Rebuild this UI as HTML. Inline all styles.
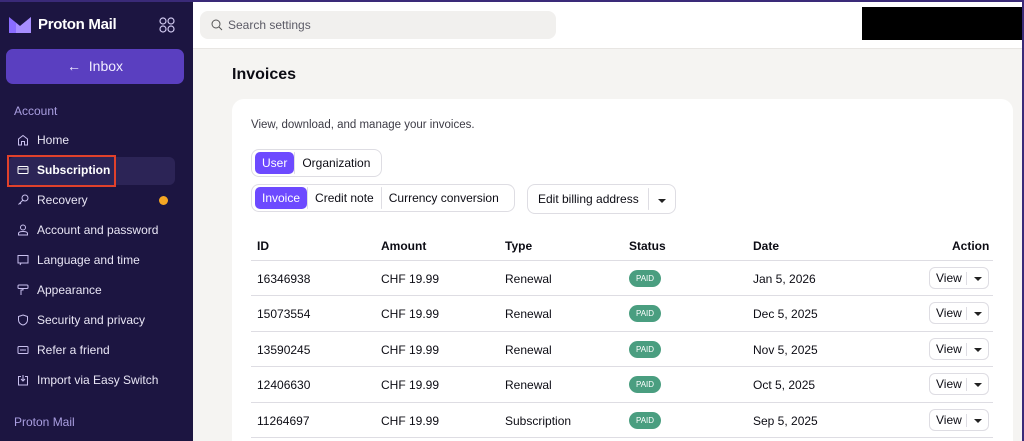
<!DOCTYPE html>
<html style="overflow:hidden;width:1024px;height:441px"><head><meta charset="utf-8"><style>
*{box-sizing:border-box;margin:0;padding:0}
body{width:1024px;height:441px;overflow:hidden;font-family:"Liberation Sans",sans-serif;background:#f5f4f2;position:relative;font-size:13px;color:#0c0c14;white-space:nowrap}
.sb{position:absolute;left:0;top:0;width:193px;height:441px;background:#1c1541;color:#fff}
.topline{position:absolute;left:0;top:0;width:1024px;height:2px;background:#3a2a78;z-index:5}
.rightline{position:absolute;right:0;top:0;width:2px;height:441px;background:#3a2a78;z-index:5}
.hdr{position:absolute;left:193px;top:0;right:0;height:49px;background:#fff;border-bottom:1px solid #e8e6e3}
.search{position:absolute;left:7px;top:11px;width:356px;height:28px;background:#f1f0ee;border-radius:8px;font-size:12px;color:#5c5b66;padding:7px 0 0 28px}
.blk{position:absolute;left:669px;top:7px;width:160px;height:33px;background:#000}
.sb .item{position:absolute;left:17px;font-size:12px;color:#e9e6f5;display:flex;align-items:center;gap:8px}
.ic{width:12px;height:12px;display:inline-block}
.card{position:absolute;left:232px;top:99px;width:781px;height:342px;background:#fff;border-radius:12px 12px 0 0}
.seg{position:absolute;border:1px solid #dedde3;border-radius:8px;height:28px;display:flex;align-items:center;padding:3px;font-size:12px}
.seg span{padding:0 7px;height:22px;line-height:22px;border-radius:5px}
.seg .on{background:#6d4aff;color:#fff}
.seg .sep{border-left:1px solid #dedde3;height:22px;padding:0}
.th{position:absolute;top:239px;font-weight:bold;font-size:12px}
.td{position:absolute;font-size:12px}
.hr{position:absolute;left:251px;width:742px;height:1px;background:#dedde3}
.paid{position:absolute;left:629px;width:32px;height:17px;border-radius:9px;background:#4a9e80;color:#fff;font-size:8px;text-align:center;line-height:17px}
.view{position:absolute;left:929px;width:60px;height:22px;border:1px solid #dedde3;border-radius:6px;font-size:12px;padding:3px 0 0 6px}
.view:after{content:"";position:absolute;left:36px;top:4px;height:13px;border-left:1px solid #dedde3}
.view i{position:absolute;left:44px;top:9px;border:4px solid transparent;border-top:4px solid #222;border-bottom:0}
</style></head><body>
<div class="topline"></div><div class="rightline"></div>
<div class="sb">
 <svg style="position:absolute;left:8px;top:16px" width="24" height="18" viewBox="0 0 24 18"><path d="M1 1 L12 10 L23 1 V17 H1 Z" fill="#8a6cff"/><path d="M1 1 L12 10 L23 1 V17 H8 V7Z" fill="#b49cff" opacity=".7"/></svg>
 <div style="position:absolute;left:38px;top:16px;font-size:15px;font-weight:bold;letter-spacing:-.3px">Proton Mail</div>
 <svg style="position:absolute;left:159px;top:17px" width="16" height="16" viewBox="0 0 16 16" fill="none" stroke="#cfc8ee" stroke-width="1.2"><circle cx="4" cy="4" r="3"/><circle cx="12" cy="4" r="3"/><circle cx="4" cy="12" r="3"/><circle cx="12" cy="12" r="3"/></svg>
 <div style="position:absolute;left:6px;top:49px;width:178px;height:35px;background:#5a3fc0;border-radius:7px;font-size:14px;text-align:center;line-height:35px;color:#f0ecff">← &nbsp;Inbox</div>
 <div style="position:absolute;left:14px;top:104px;font-size:12px;color:#a99ee0">Account</div>
 <div class="item" style="top:133px"><svg class="ic" viewBox="0 0 12 12" fill="none" stroke="#c9c0ee"><path d="M1.5 11V5L6 1.5 10.5 5V11H7.5V7.5H4.5V11Z"/></svg>Home</div>
 <div style="position:absolute;left:8px;top:157px;width:167px;height:28px;background:#2c2456;border-radius:6px"></div>
 <div style="position:absolute;left:7px;top:155px;width:109px;height:32px;border:2px solid #e1412b"></div>
 <div class="item" style="top:163px;font-weight:bold;color:#fff"><svg class="ic" viewBox="0 0 12 12" fill="none" stroke="#fff"><rect x="1" y="2.5" width="10" height="7" rx="1"/><path d="M1 5H11"/></svg>Subscription</div>
 <div class="item" style="top:193px"><svg class="ic" viewBox="0 0 12 12" fill="none" stroke="#c9c0ee"><circle cx="8" cy="4" r="3"/><path d="M6 6L1.5 10.5M3 9L4 10"/></svg>Recovery</div>
 <div style="position:absolute;left:159px;top:196px;width:9px;height:9px;border-radius:50%;background:#f5a623"></div>
 <div class="item" style="top:223px"><svg class="ic" viewBox="0 0 12 12" fill="none" stroke="#c9c0ee"><circle cx="6" cy="3.5" r="2.5"/><path d="M1.5 11V9.5C1.5 8 3 7.5 6 7.5S10.5 8 10.5 9.5V11Z"/></svg>Account and password</div>
 <div class="item" style="top:253px"><svg class="ic" viewBox="0 0 12 12" fill="none" stroke="#c9c0ee"><rect x="1" y="1.5" width="10" height="7.5"/><path d="M3 11L4 9"/></svg>Language and time</div>
 <div class="item" style="top:283px"><svg class="ic" viewBox="0 0 12 12" fill="none" stroke="#c9c0ee"><rect x="1" y="1" width="10" height="3.5" rx="1"/><path d="M6 4.5V6H4V11"/></svg>Appearance</div>
 <div class="item" style="top:313px"><svg class="ic" viewBox="0 0 12 12" fill="none" stroke="#c9c0ee"><path d="M6 1L10.5 2.5V6C10.5 8.5 8.5 10.5 6 11 3.5 10.5 1.5 8.5 1.5 6V2.5Z"/></svg>Security and privacy</div>
 <div class="item" style="top:343px"><svg class="ic" viewBox="0 0 12 12" fill="none" stroke="#c9c0ee"><rect x="1" y="2.5" width="10" height="7" rx="1"/><path d="M3 6H9"/></svg>Refer a friend</div>
 <div class="item" style="top:373px"><svg class="ic" viewBox="0 0 12 12" fill="none" stroke="#c9c0ee"><path d="M4 2.5H1.5V11H10.5V2.5H8M6 1V7M4 5L6 7 8 5"/></svg>Import via Easy Switch</div>
 <div style="position:absolute;left:14px;top:415px;font-size:12px;color:#a99ee0">Proton Mail</div>
</div>
<div class="hdr"><div class="search"><svg style="position:absolute;left:11px;top:8px" width="12" height="12" viewBox="0 0 12 12" fill="none" stroke="#555"><circle cx="5" cy="5" r="4"/><path d="M8 8L11 11"/></svg>Search settings</div><div class="blk"></div></div>
<div style="position:absolute;left:232px;top:66px;font-size:16px;font-weight:bold">Invoices</div>
<div class="card"></div>
<div style="position:absolute;left:251px;top:119px;font-size:11.5px;color:#3c3b45">View, download, and manage your invoices.</div>
<div class="seg" style="left:251px;top:149px;width:131px"><span class="on">User</span><span class="sep"></span><span>Organization</span></div>
<div class="seg" style="left:251px;top:184px;width:264px"><span class="on">Invoice</span><span class="sep"></span><span>Credit note</span><span class="sep"></span><span>Currency conversion</span></div>
<div class="seg" style="left:527px;top:184px;width:149px;height:30px;padding-left:10px">Edit billing address<span class="sep" style="margin-left:9px"></span><i style="margin-left:9px;border:4px solid transparent;border-top:4px solid #222;border-bottom:0;margin-top:3px"></i></div>
<div class="th" style="left:257px">ID</div><div class="th" style="left:381px">Amount</div><div class="th" style="left:505px">Type</div><div class="th" style="left:629px">Status</div><div class="th" style="left:753px">Date</div><div class="th" style="left:952px">Action</div>
<div class="hr" style="top:260px"></div>
<div class="td" style="left:257px;top:272px">16346938</div><div class="td" style="left:381px;top:272px">CHF 19.99</div><div class="td" style="left:505px;top:272px">Renewal</div><div class="paid" style="top:270px">PAID</div><div class="td" style="left:753px;top:272px">Jan 5, 2026</div><div class="view" style="top:267px">View<i></i></div>
<div class="hr" style="top:295px"></div>
<div class="td" style="left:257px;top:307px">15073554</div><div class="td" style="left:381px;top:307px">CHF 19.99</div><div class="td" style="left:505px;top:307px">Renewal</div><div class="paid" style="top:305px">PAID</div><div class="td" style="left:753px;top:307px">Dec 5, 2025</div><div class="view" style="top:302px">View<i></i></div>
<div class="hr" style="top:331px"></div>
<div class="td" style="left:257px;top:343px">13590245</div><div class="td" style="left:381px;top:343px">CHF 19.99</div><div class="td" style="left:505px;top:343px">Renewal</div><div class="paid" style="top:341px">PAID</div><div class="td" style="left:753px;top:343px">Nov 5, 2025</div><div class="view" style="top:338px">View<i></i></div>
<div class="hr" style="top:366px"></div>
<div class="td" style="left:257px;top:378px">12406630</div><div class="td" style="left:381px;top:378px">CHF 19.99</div><div class="td" style="left:505px;top:378px">Renewal</div><div class="paid" style="top:376px">PAID</div><div class="td" style="left:753px;top:378px">Oct 5, 2025</div><div class="view" style="top:373px">View<i></i></div>
<div class="hr" style="top:402px"></div>
<div class="td" style="left:257px;top:414px">11264697</div><div class="td" style="left:381px;top:414px">CHF 19.99</div><div class="td" style="left:505px;top:414px">Subscription</div><div class="paid" style="top:412px">PAID</div><div class="td" style="left:753px;top:414px">Sep 5, 2025</div><div class="view" style="top:409px">View<i></i></div>
<div class="hr" style="top:437px"></div>
</body></html>
